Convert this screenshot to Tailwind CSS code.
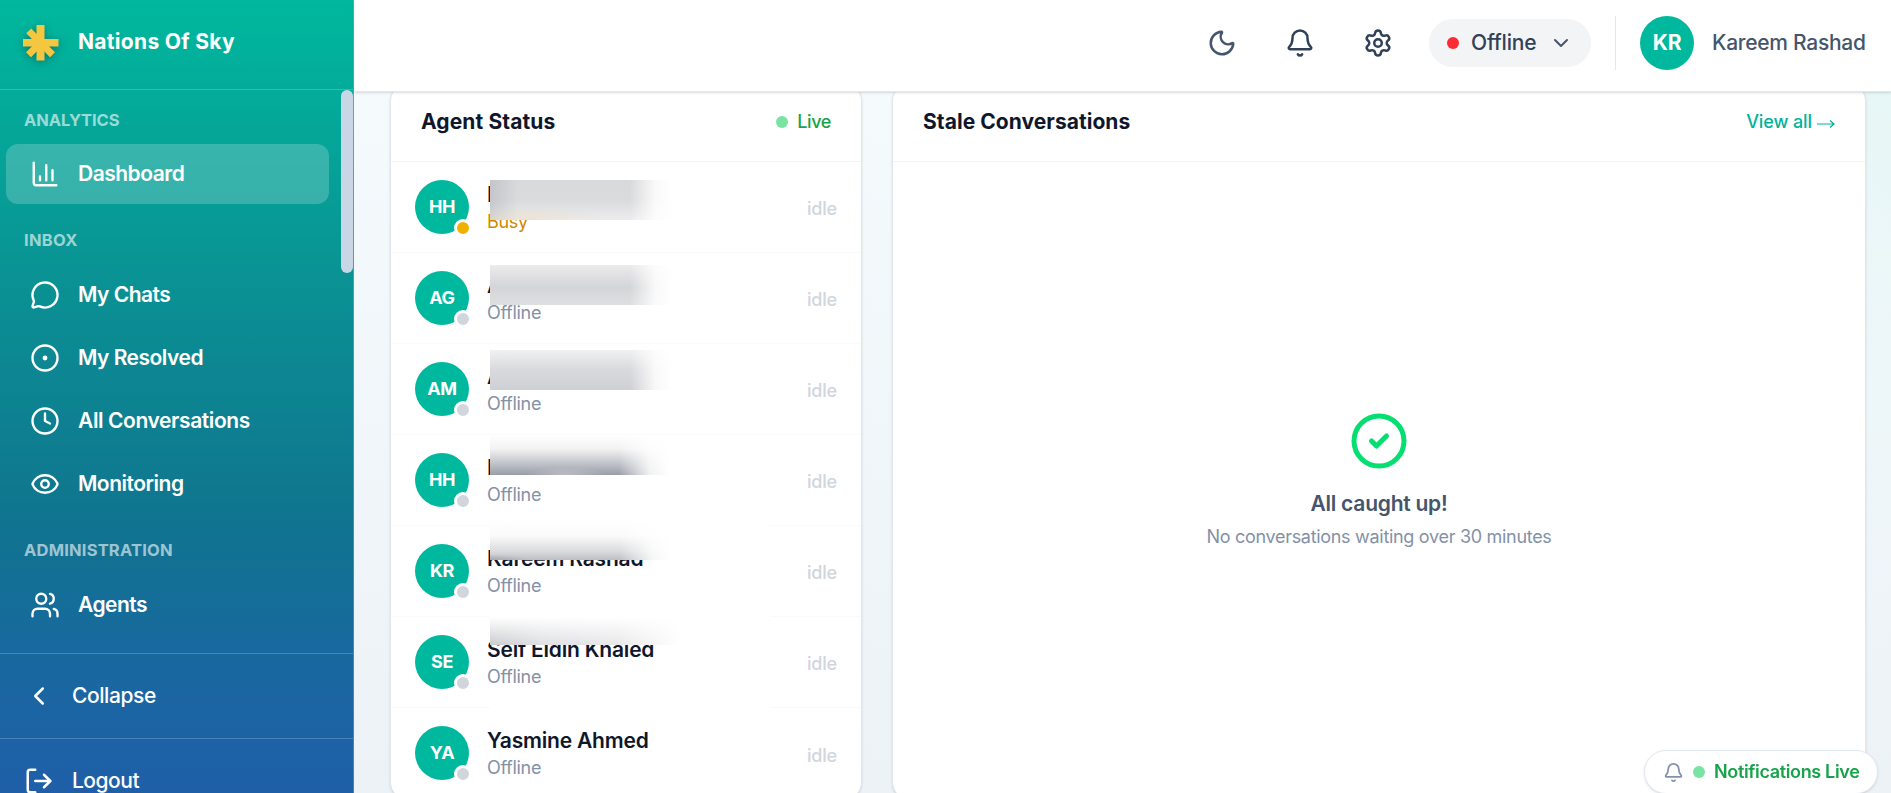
<!DOCTYPE html>
<html lang="en">

<head>
    <meta charset="UTF-8" />
    <meta name="viewport" content="width=device-width, initial-scale=1.0" />
    <title>Nations Of Sky - Dashboard</title>
    <script src="https://cdn.jsdelivr.net/npm/@tailwindcss/browser@4"></script>
</head>
<body class="h-screen overflow-hidden flex font-['Inter',sans-serif] text-[21px] leading-[30px] text-slate-900">

    <!-- Sidebar -->
    <aside class="w-[354px] h-full shrink-0 flex flex-col border-r border-white/20 bg-[linear-gradient(to_bottom,#00b89d_0%,#0a9294_35%,#10748f_66%,#1967a1_85%,#1f5fa8_100%)] bg-origin-border text-white overflow-hidden">
        <div class="h-[90px] shrink-0 flex items-center border-b border-white/20 pl-[22px] pb-1 gap-[18px]">
            <svg class="w-[38px] h-[38px] drop-shadow-[0_2px_4px_rgba(0,60,60,0.45)]" viewBox="0 0 38 38" fill="#f5c63f">
                <rect x="14.5" y="1" width="8" height="35.5" />
                <rect x="1" y="15" width="35.5" height="7.5" />
                <path d="M18.5 18.7 6.7 6.9M18.5 18.7 6.5 30.7M18.5 18.7l12 12" stroke="#f5c63f" stroke-width="7" />
            </svg>
            <span class="font-bold tracking-[0.32px] -mt-0.5">Nations Of Sky</span>
        </div>

        <div class="flex h-[563px] shrink-0">
            <nav class="flex-1 pl-1.5 pr-3 font-semibold tracking-[-0.5px]">
                <p class="h-[54px] pt-1.5 pl-[18px] flex items-center text-[16.5px] font-bold tracking-[-0.05px] text-white/60">ANALYTICS</p>
                <a class="h-[60px] pl-6 flex items-center gap-[18px] rounded-xl bg-white/20">
                    <svg class="w-[30px] h-[30px]" viewBox="0 0 24 24" fill="none" stroke="currentColor" stroke-width="1.9" stroke-linecap="round" stroke-linejoin="round"><path d="M3 3v16a2 2 0 0 0 2 2h16" /><path d="M18 17V9M13 17V5M8 17v-3" /></svg>
                    Dashboard
                </a>

                <p class="h-[61px] pt-2.5 pl-[18px] flex items-center text-[16.5px] font-bold tracking-[0.3px] text-white/60">INBOX</p>
                <div class="flex flex-col gap-[3px]">
                    <a class="h-[60px] pl-6 flex items-center gap-[18px]">
                        <svg class="w-[30px] h-[30px]" viewBox="0 0 24 24" fill="none" stroke="currentColor" stroke-width="1.9" stroke-linecap="round" stroke-linejoin="round"><path d="M2.992 16.342a2 2 0 0 1 .094 1.167l-1.065 3.29a1 1 0 0 0 1.236 1.168l3.413-.998a2 2 0 0 1 1.099.092 10 10 0 1 0-4.777-4.719" /></svg>
                        My Chats
                    </a>
                    <a class="h-[60px] pl-6 flex items-center gap-[18px]">
                        <svg class="w-[30px] h-[30px]" viewBox="0 0 24 24" fill="none" stroke="currentColor" stroke-width="1.9"><circle cx="12" cy="12" r="10" /><circle cx="12" cy="12" r="1" /></svg>
                        My Resolved
                    </a>
                    <a class="h-[60px] pl-6 flex items-center gap-[18px] tracking-[-0.4px]">
                        <svg class="w-[30px] h-[30px]" viewBox="0 0 24 24" fill="none" stroke="currentColor" stroke-width="1.9" stroke-linecap="round" stroke-linejoin="round"><circle cx="12" cy="12" r="10" /><path d="M12 6v6l4 2" /></svg>
                        All Conversations
                    </a>
                    <a class="h-[60px] pl-6 flex items-center gap-[18px]">
                        <svg class="w-[30px] h-[30px]" viewBox="0 0 24 24" fill="none" stroke="currentColor" stroke-width="1.9" stroke-linecap="round" stroke-linejoin="round"><path d="M2.062 12.348a1 1 0 0 1 0-.696 10.75 10.75 0 0 1 19.876 0 1 1 0 0 1 0 .696 10.75 10.75 0 0 1-19.876 0" /><circle cx="12" cy="12" r="3" /></svg>
                        Monitoring
                    </a>
                </div>

                <p class="h-[61px] pt-2.5 pl-[18px] flex items-center text-[16.5px] font-bold tracking-[0.2px] text-white/60">ADMINISTRATION</p>
                <a class="h-[60px] pl-6 flex items-center gap-[18px]">
                    <svg class="w-[30px] h-[30px]" viewBox="0 0 24 24" fill="none" stroke="currentColor" stroke-width="1.9" stroke-linecap="round" stroke-linejoin="round"><path d="M16 21v-2a4 4 0 0 0-4-4H6a4 4 0 0 0-4 4v2" /><path d="M16 3.128a4 4 0 0 1 0 7.744" /><path d="M22 21v-2a4 4 0 0 0-3-3.87" /><circle cx="9" cy="7" r="4" /></svg>
                    Agents
                </a>
            </nav>
            <!-- Scrollbar -->
            <div class="w-3 shrink-0">
                <div class="h-[183px] rounded-full bg-[#c9d6e6]"></div>
            </div>
        </div>

        <div class="h-[85px] shrink-0 border-t border-white/20 pl-6 flex items-center gap-[18px] font-medium tracking-[-0.42px]">
            <svg class="w-[30px] h-[30px]" viewBox="0 0 24 24" fill="none" stroke="currentColor" stroke-width="2" stroke-linecap="round" stroke-linejoin="round"><path d="m15 18-6-6 6-6" /></svg>
            Collapse
        </div>
        <div class="h-[85px] shrink-0 border-t border-white/20 pl-6 flex items-center gap-[18px] font-medium tracking-[-0.5px]">
            <svg class="w-[30px] h-[30px]" viewBox="0 0 24 24" fill="none" stroke="currentColor" stroke-width="2" stroke-linecap="round" stroke-linejoin="round"><path d="m16 17 5-5-5-5" /><path d="M21 12H9" /><path d="M9 21H5a2 2 0 0 1-2-2V5a2 2 0 0 1 2-2h4" /></svg>
            Logout
        </div>
    </aside>

    <div class="flex-1 min-w-0 flex flex-col">
        <!-- Topbar -->
        <header class="relative z-10 h-[92px] shrink-0 pb-[5px] pr-[25px] flex items-center justify-end bg-white border-b border-gray-200 shadow-sm font-medium text-slate-700">
            <svg class="w-[30px] h-[30px] mr-12 text-slate-600" viewBox="0 0 24 24" fill="none" stroke="currentColor" stroke-width="2" stroke-linecap="round" stroke-linejoin="round"><path d="M20.985 12.486a9 9 0 1 1-9.473-9.472c.405-.022.617.46.402.803a6 6 0 0 0 8.268 8.268c.344-.215.825-.004.803.401" /></svg>
            <svg class="w-[30px] h-[30px] mr-12" viewBox="0 0 24 24" fill="none" stroke="currentColor" stroke-width="2" stroke-linecap="round" stroke-linejoin="round"><path d="M10.268 21a2 2 0 0 0 3.464 0" /><path d="M3.262 15.326A1 1 0 0 0 4 17h16a1 1 0 0 0 .74-1.673C19.41 13.956 18 12.499 18 8A6 6 0 0 0 6 8c0 4.499-1.411 5.956-2.738 7.326" /></svg>
            <svg class="w-[30px] h-[30px] mr-9" viewBox="0 0 24 24" fill="none" stroke="currentColor" stroke-width="2" stroke-linecap="round" stroke-linejoin="round"><path d="M9.671 4.136a2.34 2.34 0 0 1 4.659 0 2.34 2.34 0 0 0 3.319 1.915 2.34 2.34 0 0 1 2.33 4.033 2.34 2.34 0 0 0 0 3.831 2.34 2.34 0 0 1-2.33 4.033 2.34 2.34 0 0 0-3.319 1.915 2.34 2.34 0 0 1-4.659 0 2.34 2.34 0 0 0-3.32-1.915 2.34 2.34 0 0 1-2.33-4.033 2.34 2.34 0 0 0 0-3.831A2.34 2.34 0 0 1 6.35 6.051a2.34 2.34 0 0 0 3.319-1.915" /><circle cx="12" cy="12" r="3" /></svg>
            <div class="w-[162px] h-12 mr-6 px-[18px] flex items-center rounded-full bg-gray-100">
                <span class="w-3 h-3 mr-3 rounded-full bg-[#fb2c36]"></span>
                <span class="tracking-[-0.2px]">Offline</span>
                <svg class="w-6 h-6 ml-auto text-slate-600" viewBox="0 0 24 24" fill="none" stroke="currentColor" stroke-width="2" stroke-linecap="round" stroke-linejoin="round"><path d="m6 9 6 6 6-6" /></svg>
            </div>
            <div class="h-[54px] border-l border-gray-200 pl-6 flex items-center gap-[18px]">
                <span class="w-[54px] h-[54px] flex items-center justify-center rounded-full bg-[#00b89d] text-white font-bold tracking-[-0.3px]">KR</span>
                <span class="w-[154px] whitespace-nowrap text-slate-600 font-[450] tracking-[-0.28px]">Kareem Rashad</span>
            </div>
        </header>

        <!-- Cards -->
        <main class="flex-1 -mt-[9px] pl-9 pr-[25px] flex gap-[30px] items-start bg-[radial-gradient(circle_at_100%_0%,#e7f6f6_0%,rgba(231,246,246,0)_30%),linear-gradient(to_bottom,#f5fafd_0%,#edf2f7_100%)]">
            <section class="relative w-[472px] h-[717px] shrink-0 rounded-[18px] border border-slate-200 bg-white shadow-sm overflow-hidden">
                <div class="h-[78px] pb-0.5 px-[30px] flex items-center justify-between border-b border-gray-100">
                    <h2 class="font-bold tracking-[0.12px]">Agent Status</h2>
                    <div class="flex items-center gap-[9px] text-lg font-medium text-[#16a34a] tracking-[-0.4px]">
                        <span class="w-3 h-3 rounded-full bg-[#79e3a3]"></span>Live
                    </div>
                </div>
                <div id="agents"></div>

                <!-- Blurred strips over the names -->
                <div class="absolute left-[99px] top-[96px] w-[280px] h-10 bg-[linear-gradient(to_right,rgba(255,255,255,0)_50%,rgba(255,255,255,0.85)_59%,#fff_65%),radial-gradient(ellipse_at_12%_100%,rgba(240,215,170,0.4)_0%,rgba(240,215,170,0)_22%),linear-gradient(to_right,rgba(120,125,135,0.22)_0%,rgba(120,125,135,0)_10%),linear-gradient(to_bottom,#d8d9db_0%,#dadbdd_50%,#ececed_100%)]"></div>
                <div class="absolute left-[99px] top-[181px] w-[280px] h-10 bg-[linear-gradient(to_right,rgba(255,255,255,0)_50%,rgba(255,255,255,0.85)_59%,#fff_65%),linear-gradient(to_bottom,#ebebec_0%,#d4d5d8_55%,#dedfe1_100%)]"></div>
                <div class="absolute left-[99px] top-[266px] w-[280px] h-10 bg-[linear-gradient(to_right,rgba(255,255,255,0)_50%,rgba(255,255,255,0.85)_59%,#fff_65%),linear-gradient(to_bottom,#f1f1f2_0%,#d8d9dc_50%,#cfd0d3_100%)]"></div>
                <div class="absolute left-[99px] top-[351px] w-[280px] h-10 bg-[linear-gradient(to_right,rgba(255,255,255,0)_46%,rgba(255,255,255,0.85)_57%,#fff_64%),radial-gradient(ellipse_at_27%_100%,rgba(255,255,255,0.3)_0%,rgba(255,255,255,0)_14%),linear-gradient(to_bottom,#fff_0%,#f2f2f3_35%,#bbbec5_75%,#999da6_100%)]"></div>
                <div class="absolute left-[99px] top-[436px] w-[280px] h-10 bg-[linear-gradient(to_right,rgba(255,255,255,0)_46%,rgba(255,255,255,0.85)_58%,#fff_65%),radial-gradient(ellipse_at_0%_100%,rgba(90,95,105,0.25)_0%,rgba(90,95,105,0)_10%),linear-gradient(to_bottom,#fff_0%,#fafafa_40%,#dadbde_78%,#bdbfc4_100%)]"></div>
                <div class="absolute left-[99px] top-[521px] w-[280px] h-10 bg-[linear-gradient(to_bottom,#fff_30%,rgba(255,255,255,0)_100%),linear-gradient(to_right,#cbccd0_0%,#dfe0e3_18%,#e8e8ea_45%,#fff_68%)]"></div>
                <div class="absolute left-[99px] top-[606px] w-[280px] h-5 bg-white"></div>
            </section>

            <section class="flex-1 h-[717px] rounded-[18px] border border-slate-200 bg-white shadow-sm overflow-hidden flex flex-col">
                <div class="h-[78px] pb-0.5 shrink-0 px-[30px] flex items-center justify-between border-b border-gray-100">
                    <h2 class="font-bold tracking-[0.05px]">Stale Conversations</h2>
                    <a class="flex items-center text-lg font-medium text-[#00b39b] tracking-[-0.1px]">View all
                        <svg class="w-[18px] h-3 ml-[5px] mt-1" viewBox="0 0 18 12" fill="none" stroke="currentColor" stroke-width="1.2"><path d="M0 6h17M13 2.5 17 6l-4 3.5" /></svg>
                    </a>
                </div>
                <div class="flex-1 pb-0.5 flex flex-col items-center justify-center">
                    <svg class="w-[60px] h-[60px] text-[#05df72]" viewBox="0 0 24 24" fill="none" stroke="currentColor" stroke-width="2" stroke-linecap="round" stroke-linejoin="round"><circle cx="12" cy="12" r="10" /><path d="m9 12 2 2 4-4" /></svg>
                    <p class="mt-[18px] font-semibold text-slate-600 tracking-[-0.24px]">All caught up!</p>
                    <p class="mt-1.5 text-lg leading-6 text-[#8391a7] tracking-[-0.3px]">No conversations waiting over 30 minutes</p>
                </div>
            </section>
        </main>
    </div>

    <!-- Notification status -->
    <div class="fixed z-20 left-[1644px] top-[750px] w-[234px] h-11 pl-[18px] flex items-center rounded-full bg-white border border-slate-200 shadow-sm text-lg font-semibold text-[#16a34a] whitespace-nowrap tracking-[-0.35px]">
        <svg class="w-[21px] h-[21px] mr-[9px] text-[#8391a7]" viewBox="0 0 24 24" fill="none" stroke="currentColor" stroke-width="2" stroke-linecap="round" stroke-linejoin="round"><path d="M10.268 21a2 2 0 0 0 3.464 0" /><path d="M3.262 15.326A1 1 0 0 0 4 17h16a1 1 0 0 0 .74-1.673C19.41 13.956 18 12.499 18 8A6 6 0 0 0 6 8c0 4.499-1.411 5.956-2.738 7.326" /></svg>
        <span class="w-3 h-3 mr-[9px] rounded-full bg-[#79e3a3]"></span>Notifications Live
    </div>

    <script>
        const agents = [
            { initials: 'HH', name: 'H', status: 'Busy' },
            { initials: 'AG', name: 'A', status: 'Offline' },
            { initials: 'AM', name: 'A', status: 'Offline' },
            { initials: 'HH', name: 'H', status: 'Offline' },
            { initials: 'KR', name: 'Kareem Rashad', status: 'Offline' },
            { initials: 'SE', name: 'Seif Eldin Khaled', status: 'Offline' },
            { initials: 'YA', name: 'Yasmine Ahmed', status: 'Offline' },
        ];

        document.getElementById('agents').innerHTML = agents.map((a) => `
            <div class="h-[91px] pb-px px-6 flex items-center border-b border-gray-50 last:border-b-0">
                <div class="relative w-[54px] h-[54px] mr-[18px] flex items-center justify-center rounded-full bg-[#00b89d] text-white text-lg font-bold tracking-[-0.4px]">
                    ${a.initials}
                    <span class="absolute -right-[3px] -bottom-[3px] w-[18px] h-[18px] rounded-full border-[3px] border-white ${a.status === 'Busy' ? 'bg-[#f0b100]' : 'bg-gray-300'}"></span>
                </div>
                <div class="flex-1">
                    <p class="font-semibold tracking-[-0.2px]">${a.name}</p>
                    <p class="text-lg leading-6 tracking-[-0.3px] ${a.status === 'Busy' ? 'text-[#d08700]' : 'text-[#8391a7]'}">${a.status}</p>
                </div>
                <span class="pt-[5px] text-lg font-medium text-gray-300 tracking-[-0.2px]">idle</span>
            </div>`).join('');
    </script>
</body>

</html>
